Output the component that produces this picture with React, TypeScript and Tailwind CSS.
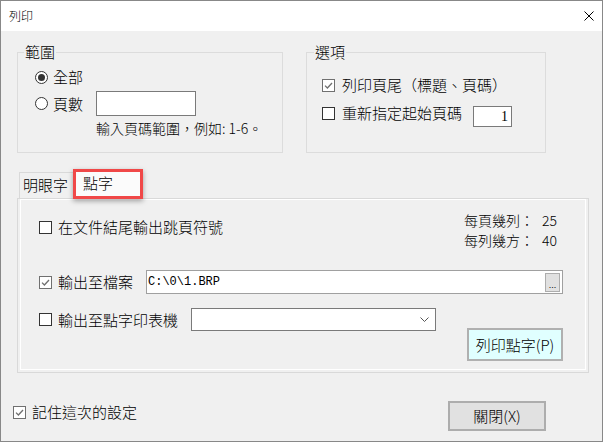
import React from 'react'

function Check({ checked }: { checked?: boolean }) {
  return (
    <span
      className={
        checked
          ? 'w-[13px] h-[13px] shrink-0 border border-[#707070] bg-white flex items-center justify-center'
          : 'w-[13px] h-[13px] shrink-0 border border-[#333333] bg-white flex items-center justify-center'
      }
    >
      {checked && (
        <svg width="9" height="9" viewBox="0 0 9 9">
          <path d="M1 4.6 L3.4 7 L8 2" stroke="#707070" strokeWidth="1.3" fill="none" />
        </svg>
      )}
    </span>
  )
}

function Radio({ on }: { on?: boolean }) {
  return (
    <span className="w-[13px] h-[13px] shrink-0 rounded-full border border-[#333333] bg-white flex items-center justify-center">
      {on && <span className="w-[7px] h-[7px] rounded-full bg-[#333333]" />}
    </span>
  )
}

export default function App() {
  return (
    <div className="w-[603px] h-[442px] border border-[#888888] bg-[#f0f0f0] flex flex-col text-black font-light font-['Noto_Sans_CJK_TC','Microsoft_JhengHei',sans-serif] overflow-hidden">
      {/* title bar */}
      <div className="h-[30px] bg-white flex items-center justify-between pl-[8px] pr-[8px] shrink-0">
        <span className="text-[12px] leading-[16px]">列印</span>
        <svg width="10" height="10" viewBox="0 0 10 10">
          <path d="M0.5 0.5 L9.5 9.5 M9.5 0.5 L0.5 9.5" stroke="#000" strokeWidth="1" />
        </svg>
      </div>

      {/* option groups */}
      <div className="flex gap-[23px] pl-[16px] pt-[11px]">
        <fieldset className="border border-[#dcdcdc] w-[266px] h-[111px]">
          <legend className="ml-[6px] px-[1px] text-[15px] leading-[20px]">範圍</legend>
          <div className="pl-[17px] flex flex-col">
            <div className="flex items-center gap-[5px] mt-[4px] text-[15px] leading-[22px]">
              <Radio on />
              <span>全部</span>
            </div>
            <div className="flex items-center mt-[3px] text-[15px] leading-[22px]">
              <Radio />
              <span className="ml-[5px] w-[43px]">頁數</span>
              <div className="w-[100px] h-[25px] bg-white border border-[#7a7a7a]" />
            </div>
            <div className="ml-[61px] mt-[3px] text-[14px] leading-[18px] whitespace-nowrap">
              輸入頁碼範圍，例如: 1-6。
            </div>
          </div>
        </fieldset>

        <fieldset className="border border-[#dcdcdc] w-[240px] h-[111px]">
          <legend className="ml-[7px] px-[1px] text-[15px] leading-[20px]">選項</legend>
          <div className="pl-[15px] flex flex-col">
            <div className="flex items-center gap-[7px] mt-[12px] text-[15px] leading-[22px] whitespace-nowrap">
              <Check checked />
              <span>列印頁尾（標題、頁碼）</span>
            </div>
            <div className="flex items-start mt-[6px] text-[15px] leading-[22px]">
              <div className="flex items-center gap-[7px]">
                <Check />
                <span className="w-[131px] whitespace-nowrap">重新指定起始頁碼</span>
              </div>
              <div className="mt-[4px] w-[39px] h-[21px] bg-white border border-[#7a7a7a] flex items-center justify-end pr-[3px] text-[14px] font-['Liberation_Serif',serif]">
                1
              </div>
            </div>
          </div>
        </fieldset>
      </div>

      {/* tabs */}
      <div className="ml-[16px] mt-[16px] flex flex-col">
        <div className="flex items-end h-[29px] pl-[2px]">
          <div className="h-[26px] w-[56px] border border-b-0 border-[#d9d9d9] pl-[3px] text-[15px] leading-[24px] whitespace-nowrap">
            明眼字
          </div>
          <div className="relative z-10 -ml-[2px] -mb-[1px] h-[30px] w-[70px] bg-[#fbfbfb] border-[3px] border-[#f04848] shadow-[0_2px_5px_rgba(0,0,0,0.35)] pl-[7px] text-[15px] leading-[22px]">
            點字
          </div>
        </div>

        <div className="w-[572px] h-[175px] border border-[#d9d9d9] p-[2px] pt-0">
          <div className="h-full border border-white flex flex-col">
            <div className="flex justify-between items-start pt-[10px] pl-[18px] pr-[28px]">
              <div className="flex items-center gap-[6px] mt-[6px] text-[15px] leading-[22px]">
                <Check />
                <span>在文件結尾輸出跳頁符號</span>
              </div>
              <div className="grid grid-cols-[auto_auto] gap-x-[8px] text-[14px] leading-[20px]">
                <span>每頁幾列：</span>
                <span>25</span>
                <span>每列幾方：</span>
                <span>40</span>
              </div>
            </div>

            <div className="flex items-center pl-[18px] mt-[20px] text-[15px] leading-[22px]">
              <Check checked />
              <span className="ml-[6px] w-[88px] whitespace-nowrap">輸出至檔案</span>
              <div className="w-[417px] h-[24px] bg-white border border-[#a0a0a0] flex items-center pl-[1px] pr-[2px]">
                <span className="flex-1 text-[12px] leading-[16px] font-['Liberation_Mono',monospace]">C:\0\1.BRP</span>
                <div className="w-[15px] h-[19px] bg-[#e1e1e1] border border-[#adadad] flex items-end justify-center text-[9px] leading-[12px] font-['Liberation_Sans',sans-serif]">
                  ...
                </div>
              </div>
            </div>

            <div className="flex items-start pl-[18px] mt-[14px]">
              <div className="flex items-center h-[23px] text-[15px] leading-[22px]">
                <Check />
                <span className="ml-[6px] w-[133px] whitespace-nowrap">輸出至點字印表機</span>
              </div>
              <div className="w-[245px] h-[23px] bg-white border border-[#7a7a7a] flex items-center justify-end pr-[6px]">
                <svg width="9" height="5" viewBox="0 0 9 5">
                  <path d="M0.5 0.5 L4.5 4.5 L8.5 0.5" stroke="#555" strokeWidth="1" fill="none" />
                </svg>
              </div>
              <button className="ml-[31px] mt-[20px] w-[96px] h-[33px] bg-[#e0ffff] border-2 border-[#b0b0b0] text-[15px] leading-[22px] flex items-center justify-center">
                列印點字(P)
              </button>
            </div>
          </div>
        </div>
      </div>

      {/* footer */}
      <div className="flex items-start justify-between pl-[12px] pr-[56px] mt-[28px]">
        <div className="flex items-center gap-[6px] text-[15px] leading-[22px]">
          <Check checked />
          <span>記住這次的設定</span>
        </div>
        <button className="w-[98px] h-[30px] bg-[#e1e1e1] border-2 border-[#adadad] text-[15px] leading-[22px] flex items-center justify-center">
          關閉(X)
        </button>
      </div>
    </div>
  )
}
